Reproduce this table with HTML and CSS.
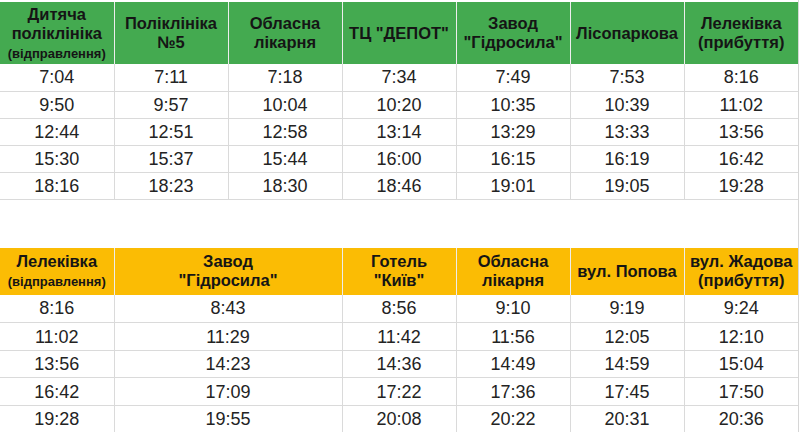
FILE: index.html
```html
<!DOCTYPE html>
<html lang="uk">
<head>
<meta charset="utf-8">
<title>Розклад</title>
<link rel="stylesheet" href="styles.css">
</head>
<body>
<div class="sheet">
  <table class="tt tt-top">
    <colgroup>
      <col class="c"><col class="c"><col class="c"><col class="c"><col class="c"><col class="c"><col class="c">
    </colgroup>
    <thead>
      <tr class="head green">
        <th>Дитяча<br>поліклініка<br><span class="sub">(відправлення)</span></th>
        <th>Поліклініка<br>№5</th>
        <th>Обласна<br>лікарня</th>
        <th>ТЦ "ДЕПОТ"</th>
        <th>Завод<br>"Гідросила"</th>
        <th>Лісопаркова</th>
        <th>Лелеківка<br>(прибуття)</th>
      </tr>
    </thead>
    <tbody>
      <tr><td>7:04</td><td>7:11</td><td>7:18</td><td>7:34</td><td>7:49</td><td>7:53</td><td>8:16</td></tr>
      <tr><td>9:50</td><td>9:57</td><td>10:04</td><td>10:20</td><td>10:35</td><td>10:39</td><td>11:02</td></tr>
      <tr><td>12:44</td><td>12:51</td><td>12:58</td><td>13:14</td><td>13:29</td><td>13:33</td><td>13:56</td></tr>
      <tr><td>15:30</td><td>15:37</td><td>15:44</td><td>16:00</td><td>16:15</td><td>16:19</td><td>16:42</td></tr>
      <tr><td>18:16</td><td>18:23</td><td>18:30</td><td>18:46</td><td>19:01</td><td>19:05</td><td>19:28</td></tr>
    </tbody>
  </table>

  <table class="tt tt-bottom">
    <colgroup>
      <col class="c"><col class="c"><col class="c"><col class="c"><col class="c"><col class="c"><col class="c">
    </colgroup>
    <thead>
      <tr class="head yellow">
        <th>Лелеківка<br><span class="sub">(відправлення)</span></th>
        <th colspan="2">Завод<br>"Гідросила"</th>
        <th>Готель<br>"Київ"</th>
        <th>Обласна<br>лікарня</th>
        <th>вул. Попова</th>
        <th>вул. Жадова<br>(прибуття)</th>
      </tr>
    </thead>
    <tbody>
      <tr class="r28"><td>8:16</td><td colspan="2">8:43</td><td>8:56</td><td>9:10</td><td>9:19</td><td>9:24</td></tr>
      <tr class="r28"><td>11:02</td><td colspan="2">11:29</td><td>11:42</td><td>11:56</td><td>12:05</td><td>12:10</td></tr>
      <tr><td>13:56</td><td colspan="2">14:23</td><td>14:36</td><td>14:49</td><td>14:59</td><td>15:04</td></tr>
      <tr class="r28"><td>16:42</td><td colspan="2">17:09</td><td>17:22</td><td>17:36</td><td>17:45</td><td>17:50</td></tr>
      <tr><td>19:28</td><td colspan="2">19:55</td><td>20:08</td><td>20:22</td><td>20:31</td><td>20:36</td></tr>
    </tbody>
  </table>
</div>
</body>
</html>
```

FILE: styles.css
```css
html, body {
  margin: 0;
  padding: 0;
  background: #ffffff;
}

body {
  font-family: "Liberation Sans", Arial, sans-serif;
  color: #222222;
  width: 800px;
  height: 432px;
  overflow: hidden;
}

.sheet {
  width: 799px;
  height: 432px;
  border-right: 1px solid #d6d6d6;
  box-sizing: border-box;
  padding-top: 2px;
}

.tt {
  table-layout: fixed;
  border-collapse: collapse;
  width: 798px;
}

.tt .c {
  width: 114px;
}

.tt th,
.tt td {
  padding: 0;
  text-align: center;
  vertical-align: middle;
  overflow: hidden;
  white-space: nowrap;
}

.tt tbody tr {
  height: 27px;
}

.tt tbody tr.r28 {
  height: 28px;
}

.tt td {
  font-size: 18px;
  line-height: 20px;
  border: 1px solid #dadada;
  border-top: 0;
  color: #232323;
}

.tt td:first-child {
  border-left: 0;
}

.tt td:last-child {
  border-right: 0;
}

.head th {
  font-weight: bold;
  font-size: 16.5px;
  line-height: 19px;
  color: #151515;
  border-left: 1px solid rgba(0, 0, 0, 0.07);
}

.head th:first-child {
  border-left: 0;
}

.head .sub {
  font-size: 13px;
  line-height: 16px;
}

.green {
  height: 62px;
}

.green th {
  background: #44aa50;
}

.yellow {
  height: 47px;
}

.yellow th {
  background: #fbbc04;
}

.tt-bottom {
  margin-top: 48px;
}
```
